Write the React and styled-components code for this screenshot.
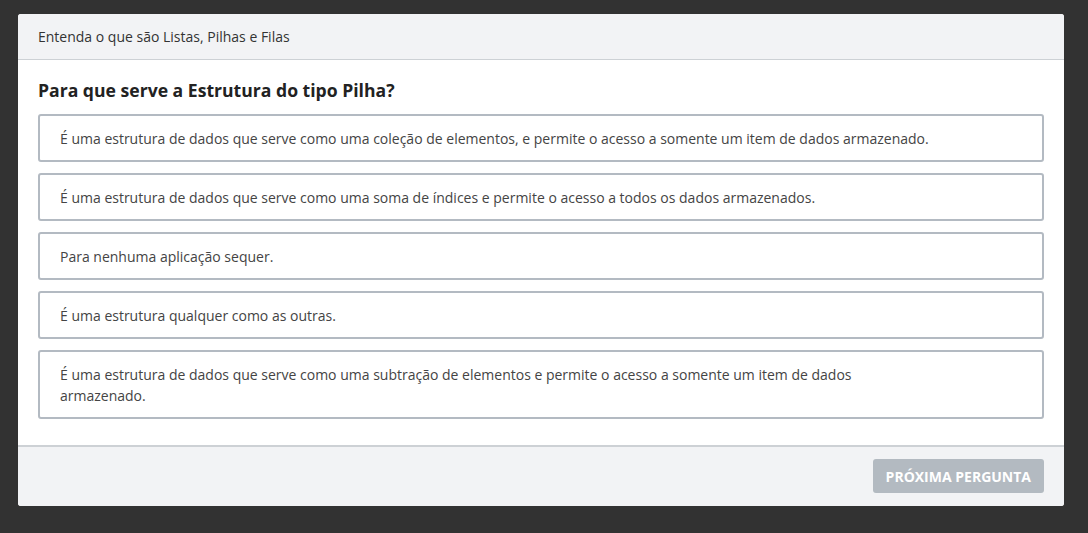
import React from "react";
import styled, { createGlobalStyle } from "styled-components";

const GlobalStyle = createGlobalStyle`
  html, body {
    margin: 0;
    padding: 0;
    background: #323232;
    font-family: "Open Sans", "Noto Sans", sans-serif;
  }
`;

const Page = styled.div`
  padding: 14px 24px 27px 18px;
`;

const Modal = styled.div`
  background: #ffffff;
  border-radius: 3px;
  overflow: hidden;
`;

const Header = styled.div`
  background: #f2f3f5;
  border-bottom: 1px solid #cdd1d5;
  padding: 0 20px;
  height: 45px;
  display: flex;
  align-items: center;
  font-size: 14px;
  color: #333;
`;

const Body = styled.div`
  padding: 18px 20px 26px;
`;

const Title = styled.h2`
  margin: 0 0 12px;
  font-size: 17.6px;
  line-height: 24px;
  font-weight: 700;
  color: #222;
`;

const Options = styled.div`
  display: flex;
  flex-direction: column;
  gap: 11px;
`;

const Option = styled.button`
  display: block;
  width: 100%;
  text-align: left;
  background: #fff;
  border: 2px solid #b3bac2;
  border-radius: 3px;
  padding: 11.5px 108px 11.5px 20px;
  font-family: inherit;
  font-size: 14px;
  line-height: 21px;
  color: #444;
  cursor: pointer;
`;

const Footer = styled.div`
  background: #f2f3f5;
  border-top: 2px solid #cdd1d5;
  padding: 12px 20px 13px;
  display: flex;
  justify-content: flex-end;
`;

const NextButton = styled.button`
  height: 34px;
  padding: 0 13px;
  border: none;
  border-radius: 3px;
  background: #b3bac1;
  color: #fff;
  font-family: inherit;
  font-size: 14px;
  font-weight: 700;
`;

const answers = [
  "É uma estrutura de dados que serve como uma coleção de elementos, e permite o acesso a somente um item de dados armazenado.",
  "É uma estrutura de dados que serve como uma soma de índices e permite o acesso a todos os dados armazenados.",
  "Para nenhuma aplicação sequer.",
  "É uma estrutura qualquer como as outras.",
  "É uma estrutura de dados que serve como uma subtração de elementos e permite o acesso a somente um item de dados armazenado.",
];

function App() {
  return (
    <Page>
      <GlobalStyle />
      <Modal>
        <Header>Entenda o que são Listas, Pilhas e Filas</Header>
        <Body>
          <Title>Para que serve a Estrutura do tipo Pilha?</Title>
          <Options>
            {answers.map((text, i) => (
              <Option key={i}>{text}</Option>
            ))}
          </Options>
        </Body>
        <Footer>
          <NextButton disabled>PRÓXIMA PERGUNTA</NextButton>
        </Footer>
      </Modal>
    </Page>
  );
}

export default App;
